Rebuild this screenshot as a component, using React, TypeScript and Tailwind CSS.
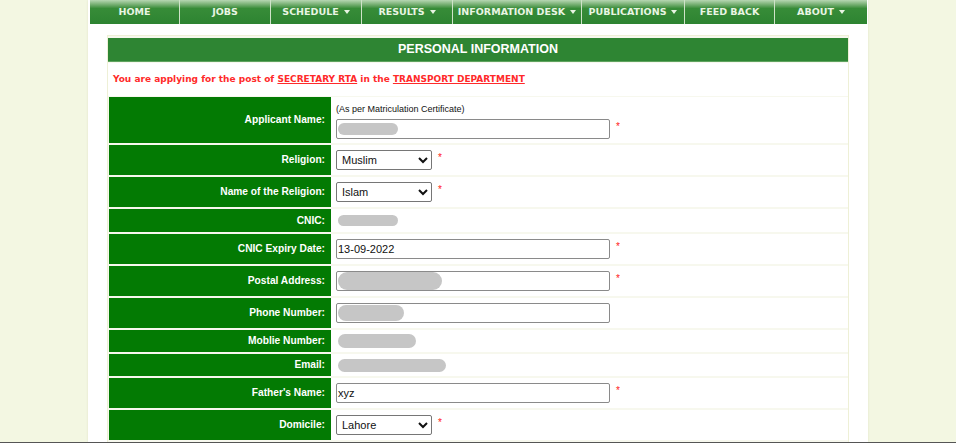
import type { ReactNode } from "react";
import clsx from "clsx";

const nav = [
  { label: "HOME", w: "w-[90px]" },
  { label: "JOBS", w: "w-[91px]" },
  { label: "SCHEDULE", w: "w-[91px]", drop: true },
  { label: "RESULTS", w: "w-[91px]", drop: true },
  { label: "INFORMATION DESK", w: "w-[129px]", drop: true },
  { label: "PUBLICATIONS", w: "w-[103px]", drop: true },
  { label: "FEED BACK", w: "w-[90px]" },
  { label: "ABOUT", w: "w-[92px]", drop: true },
];

function Star() {
  return <span className="ml-[6px] text-[#ff2020] text-[10px] leading-none -mt-[4px]">*</span>;
}

function Blob({ w, h = "h-[12px]" }: { w: string; h?: string }) {
  return <div className={clsx("rounded-full bg-[#c6c6c6] blur-[0.6px]", w, h)} />;
}

function TextBox({ value, children }: { value?: string; children?: ReactNode }) {
  return (
    <div className="w-[274px] h-[20px] border border-[#8a8a8a] rounded-[2px] bg-white flex items-center px-[1px] text-[11px] text-[#111]">
      {value}
      {children}
    </div>
  );
}

function Select({ value }: { value: string }) {
  return (
    <select
      defaultValue={value}
      className="w-[96px] h-[20px] border border-[#767676] rounded-[2px] bg-white text-[11px] text-[#111] pl-[1px]"
    >
      <option>{value}</option>
    </select>
  );
}

function Row({ label, h, children }: { label: string; h: string; children?: ReactNode }) {
  return (
    <div className={clsx("flex", h)}>
      <div className="w-[222px] shrink-0 bg-[#037a03] text-white font-bold text-[10.2px] flex items-center justify-end pr-[6px]">
        {label}
      </div>
      <div className="flex-1 bg-white flex items-center pl-[5px]">{children}</div>
    </div>
  );
}

export default function App() {
  return (
    <div className="w-full h-[443px] overflow-hidden bg-[#f3f7e2] flex flex-col" style={{ fontFamily: '"Liberation Sans", Arial, sans-serif' }}>
      <div className="flex-1 min-h-0 flex">
        <div className="ml-[88px] w-[780px] bg-white shadow-[0_0_2px_#dfe4c8] px-[2px] flex flex-col">
          {/* Nav */}
          <div className="flex h-[24px]" style={{ fontFamily: '"DejaVu Sans", Verdana, sans-serif' }}>
            {nav.map((n) => (
              <div
                key={n.label}
                className={clsx(
                  n.w,
                  "shrink-0 border-r border-[#cfe3c9] last:border-r-0 flex items-center justify-center gap-[5px] text-[9.5px] font-bold text-[#e9f5e3] bg-gradient-to-b from-[#b7d7b3] via-[#378c38] via-[35%] to-[#2d8431]"
                )}
              >
                <span className="pt-[1px]">{n.label}</span>
                {n.drop && <span className="w-0 h-0 border-l-[3px] border-r-[3px] border-t-[4px] border-l-transparent border-r-transparent border-t-[#e9f5e3]" />}
              </div>
            ))}
          </div>

          {/* Panel */}
          <div className="mt-[11px] ml-[17px] w-[742px] border border-[#eef0d6] border-b-0 flex-1 min-h-0 flex flex-col pt-[2px] bg-[#f7f8ee]">
            <div className="h-[24px] bg-[#2e8533] border-b border-[#5fa35f] flex items-center justify-center text-white font-bold text-[12.5px]">
              PERSONAL INFORMATION
            </div>
            <div className="h-[33px] mt-[1px] bg-white flex items-center pl-[5px] text-[9px] font-bold text-[#ff2a2a]" style={{ fontFamily: '"DejaVu Sans", Verdana, sans-serif' }}>
              You are applying for the post of&nbsp;<span className="underline">SECRETARY RTA</span>&nbsp;in the&nbsp;
              <span className="underline">TRANSPORT DEPARTMENT</span>
            </div>

            <div className="mt-[1px] ml-[1px] flex flex-col gap-[2px]">
              <Row label="Applicant Name:" h="h-[46px]">
                <div className="flex flex-col pt-[3px]">
                  <span className="text-[9px] text-[#111] leading-[11px] mb-[4px]">(As per Matriculation Certificate)</span>
                  <div className="flex items-center">
                    <TextBox>
                      <Blob w="w-[60px]" />
                    </TextBox>
                    <Star />
                  </div>
                </div>
              </Row>
              <Row label="Religion:" h="h-[30px]">
                <Select value="Muslim" />
                <Star />
              </Row>
              <Row label="Name of the Religion:" h="h-[30px]">
                <Select value="Islam" />
                <Star />
              </Row>
              <Row label="CNIC:" h="h-[23px]">
                <div className="pl-[2px]">
                  <Blob w="w-[60px]" h="h-[11px]" />
                </div>
              </Row>
              <Row label="CNIC Expiry Date:" h="h-[30px]">
                <TextBox value="13-09-2022" />
                <Star />
              </Row>
              <Row label="Postal Address:" h="h-[30px]">
                <TextBox>
                  <Blob w="w-[104px]" h="h-[18px]" />
                </TextBox>
                <Star />
              </Row>
              <Row label="Phone Number:" h="h-[30px]">
                <TextBox>
                  <Blob w="w-[66px]" h="h-[16px]" />
                </TextBox>
              </Row>
              <Row label="Moblie Number:" h="h-[22px]">
                <div className="pl-[2px]">
                  <Blob w="w-[78px]" h="h-[14px]" />
                </div>
              </Row>
              <Row label="Email:" h="h-[22px]">
                <div className="pl-[2px]">
                  <Blob w="w-[108px]" h="h-[13px]" />
                </div>
              </Row>
              <Row label="Father's Name:" h="h-[30px]">
                <TextBox value="xyz" />
                <Star />
              </Row>
              <Row label="Domicile:" h="h-[30px]">
                <Select value="Lahore" />
                <Star />
              </Row>
            </div>
          </div>
        </div>
      </div>
      <div className="h-[1px] bg-[#555]" />
    </div>
  );
}
